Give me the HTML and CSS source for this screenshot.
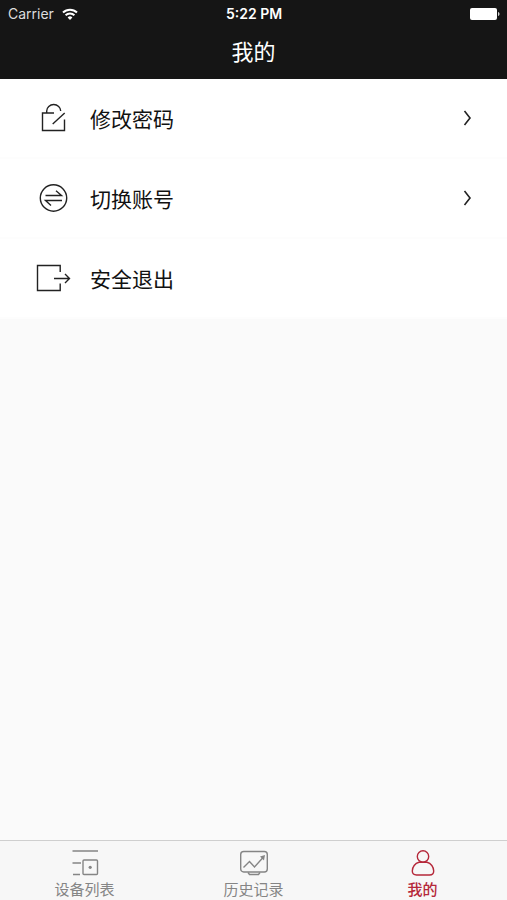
FILE: index.html
```html
<!DOCTYPE html>
<html lang="zh-CN">
<head>
  <meta charset="UTF-8" />
  <meta name="viewport" content="width=device-width, initial-scale=1.0"/>
  <title>我的</title>
  <link rel="stylesheet" href="styles.css">
</head>
<body>

  <header class="header">
    <div class="status-bar">
      <div class="carrier">
        <span>Carrier</span>
        <svg width="16" height="12" viewBox="0 0 16 12" fill="none" stroke="#fff" stroke-width="2">
          <path d="M1 4.5a10 10 0 0 1 14 0M3.6 7.3a6.3 6.3 0 0 1 8.8 0"/>
          <path d="M8 12L5.6 9.4a3.4 3.4 0 0 1 4.8 0z" fill="#fff" stroke="none"/>
        </svg>
      </div>
      <span class="time">5:22 PM</span>
      <svg class="battery" width="30" height="12" viewBox="0 0 30 12" fill="#fff">
        <rect x="0" y="0" width="27" height="12" rx="2"/>
        <path d="M28 4c2 .5 2 3.5 0 4z" opacity=".8"/>
      </svg>
    </div>
    <h1>我的</h1>
  </header>

  <main class="menu">
    <a class="menu-item" href="#password">
      <svg class="menu-icon" viewBox="0 0 36 36">
        <path d="M18 13H6.500V30.500H28.500V19.500"/>
        <path d="M10.700 13V11a7 6.500 0 0 1 14 0"/>
        <path d="M16.700 24L28.700 13"/>
      </svg>
      <span>修改密码</span>
      <svg class="arrow" width="10" height="18" viewBox="0 0 10 18"><path d="M1.500 2L7 9l-5.500 7"/></svg>
    </a>
    <a class="menu-item" href="#account">
      <svg class="menu-icon" viewBox="0 0 36 36">
        <circle cx="17.500" cy="18" r="13.200"/>
        <path d="M9.500 15.500H25.500L20 10.800M26 20.500H9.500L15 25.500"/>
      </svg>
      <span>切换账号</span>
      <svg class="arrow" width="10" height="18" viewBox="0 0 10 18"><path d="M1.500 2L7 9l-5.500 7"/></svg>
    </a>
    <a class="menu-item" href="#logout">
      <svg class="menu-icon" viewBox="0 0 36 36">
        <path d="M24.200 12V5.500H1.500V30.500H24.200V23.500"/>
        <path d="M18 18.500H33.500M29 14l4.500 4.500L29 23"/>
      </svg>
      <span>安全退出</span>
    </a>
  </main>

  <nav class="tab-bar">
    <a class="tab" href="#devices">
      <svg class="tab-icon" viewBox="0 0 28 28">
        <path d="M1.500 2H27M1.500 14H10M2 25.500H9"/>
        <rect x="12" y="11" width="14.500" height="14.500" rx="1"/>
        <circle class="dot" cx="19.200" cy="18.300" r="1.600"/>
      </svg>
      <span>设备列表</span>
    </a>
    <a class="tab" href="#history">
      <svg class="tab-icon" viewBox="0 0 28 28">
        <rect x=".7" y="2.500" width="26.600" height="20.500" rx="3"/>
        <path d="M8 23.500L9.500 25.500H18.500L20 23.500"/>
        <path d="M3.500 18.500L9.500 12.500L14.500 18L23.500 8"/>
        <path class="dot" d="M20 7.500L25 6L24 11.500z"/>
      </svg>
      <span>历史记录</span>
    </a>
    <a class="tab active" href="#mine">
      <svg class="tab-icon" viewBox="0 0 28 28">
        <circle cx="14" cy="7.500" r="5.700"/>
        <path d="M10 13.200H18C22 14.200 24.700 18 24.700 22C24.700 24.800 23 26 20.500 26H7.500C5 26 3.300 24.800 3.300 22C3.300 18 6 14.200 10 13.200z"/>
      </svg>
      <span>我的</span>
    </a>
  </nav>

</body>
</html>
```

FILE: styles.css
```css
:root {
  --bar: #151515;
  --bg: #fafafa;
  --text: #111;
  --muted: #858585;
  --active: #b5283a;
}

* {
  box-sizing: border-box;
}

body {
  margin: 0;
  min-height: 100vh;
  display: flex;
  flex-direction: column;
  font-family: Inter, 'Noto Sans CJK SC', sans-serif;
  background: var(--bg);
  color: var(--text);
}

a {
  color: inherit;
  text-decoration: none;
}

svg {
  display: block;
  flex: none;
}

.header {
  background: var(--bar);
  color: #fff;
}

.status-bar {
  display: grid;
  grid-template-columns: 1fr auto 1fr;
  align-items: center;
  height: 27px;
  padding: 0 7px 0 8px;
  font-size: 14px;
}

.carrier {
  display: flex;
  align-items: center;
  gap: 8px;
  color: #ddd;
}

.time {
  font-size: 14px;
  font-weight: 600;
}

.battery {
  justify-self: end;
}

.header h1 {
  margin: 0;
  height: 52px;
  font-size: 22px;
  font-weight: 400;
  line-height: 50px;
  text-align: center;
}

.menu {
  flex: 1;
}

.menu-item {
  display: flex;
  align-items: center;
  gap: 18px;
  height: 80px;
  padding: 0 34px 0 36px;
  background: #fff;
  border-bottom: 2px solid #fdfdfd;
  font-size: 21px;
}

.menu-icon {
  width: 36px;
  height: 36px;
}

.menu-icon,
.arrow {
  fill: none;
  stroke: #222;
  stroke-width: 1.4;
}

.arrow {
  margin-left: auto;
  stroke-width: 1.6;
}

.tab-bar {
  display: flex;
  height: 60px;
  background: #f7f7f7;
  border-top: 1px solid #cfcfcf;
}

.tab {
  flex: 1;
  display: flex;
  flex-direction: column;
  align-items: center;
  padding-top: 8px;
  color: var(--muted);
  font-size: 15px;
  line-height: 26px;
}

.tab.active {
  color: var(--active);
  font-weight: 500;
}

.tab-icon {
  width: 28px;
  height: 28px;
  fill: none;
  stroke: currentColor;
  stroke-width: 1.4;
}

.tab-icon .dot {
  fill: currentColor;
  stroke: none;
}
```
